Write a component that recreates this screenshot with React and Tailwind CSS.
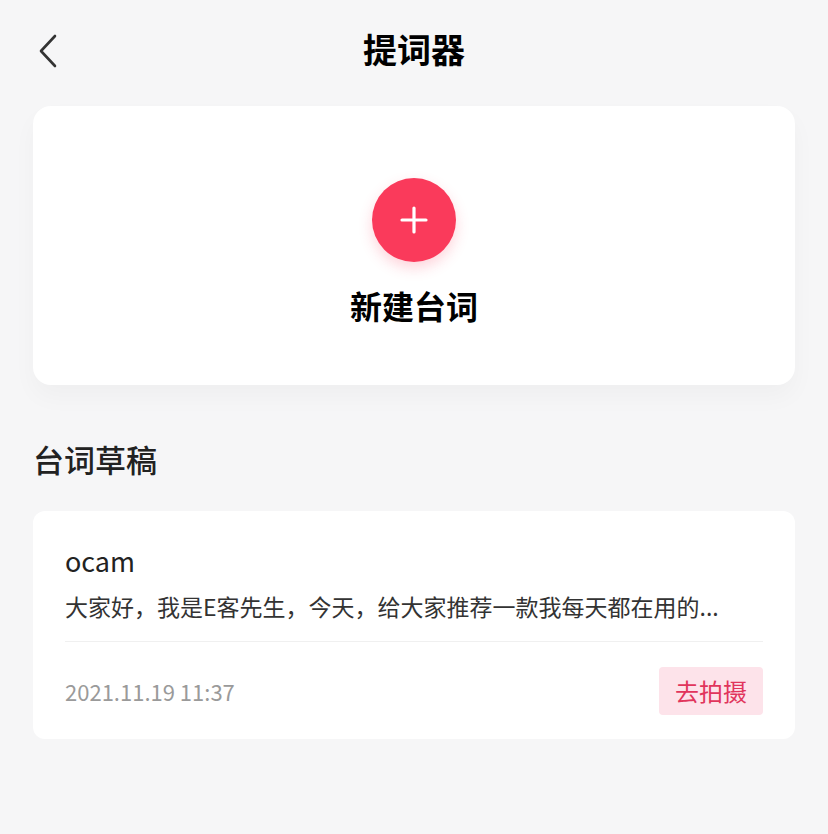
import React from 'react';

const FONT = { fontFamily: '"Noto Sans CJK SC", "Noto Sans", sans-serif' };

export default function App() {
  return (
    <div className="min-h-[834px] w-[828px] bg-[#f6f6f7] text-[#222]" style={FONT}>
      {/* header */}
      <div className="relative flex h-[106px] justify-center pt-[32px]">
        <button className="absolute left-[36px] top-[34px] text-[#333]">
          <svg width="24" height="34" viewBox="0 0 24 34" fill="none" stroke="currentColor" strokeWidth="2.6" strokeLinecap="round" strokeLinejoin="round">
            <path d="M19 2 L5 17 L19 32" />
          </svg>
        </button>
        <h1 className="text-[34px] font-bold leading-none text-black">提词器</h1>
      </div>

      <div className="px-[33px]">
        {/* new card */}
        <div className="flex h-[279px] flex-col items-center rounded-[18px] bg-white pt-[72px] shadow-[0_12px_24px_rgba(0,0,0,0.03)]">
          <div className="flex h-[84px] w-[84px] items-center justify-center rounded-full bg-[#fa3a5b] shadow-[0_6px_14px_rgba(251,59,92,0.22)]">
            <svg width="30" height="30" viewBox="0 0 30 30" stroke="white" strokeWidth="3.2" strokeLinecap="round">
              <path d="M15 3 V27 M3 15 H27" />
            </svg>
          </div>
          <div className="mt-[27px] text-[32px] font-bold leading-none text-black">新建台词</div>
        </div>

        {/* drafts */}
        <h2 className="mt-[58px] text-[31px] font-medium leading-none text-[#222]">台词草稿</h2>

        <div className="mt-[37px] rounded-[12px] bg-white px-[32px] pt-[36px] pb-[24px]">
          <div className="text-[27px] leading-none text-[#222]">ocam</div>
          <div className="mt-[21px] whitespace-nowrap text-[23px] leading-none text-[#333]">
            大家好，我是E客先生，今天，给大家推荐一款我每天都在用的...
          </div>
          <div className="mt-[23px] h-px bg-[#f0f0f0]" />
          <div className="mt-[25px] flex items-center justify-between">
            <span className="text-[22px] text-[#9a9a9a]">2021.11.19 11:37</span>
            <button className="flex h-[48px] w-[104px] items-center justify-center rounded-[4px] bg-[#fde3ea] text-[24px] text-[#e1355c]">
              去拍摄
            </button>
          </div>
        </div>
      </div>
    </div>
  );
}
